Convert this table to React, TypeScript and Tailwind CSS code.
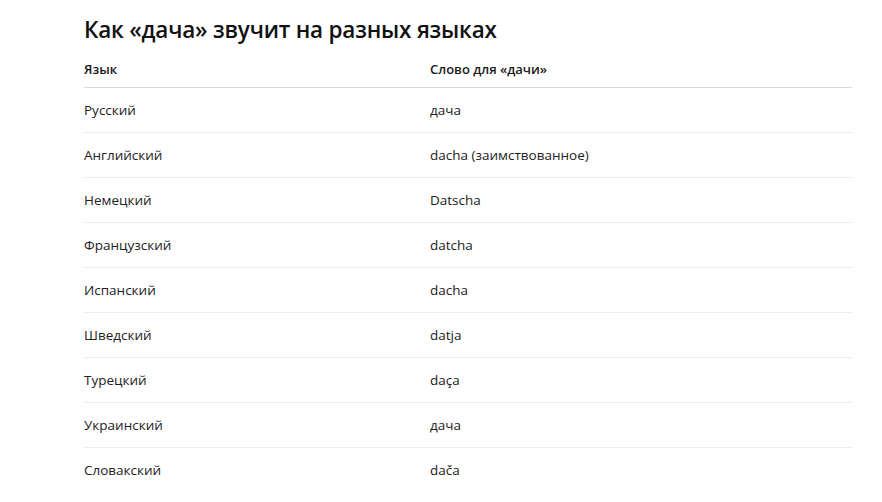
const rows: [string, string][] = [
  ['Русский', 'дача'],
  ['Английский', 'dacha (заимствованное)'],
  ['Немецкий', 'Datscha'],
  ['Французский', 'datcha'],
  ['Испанский', 'dacha'],
  ['Шведский', 'datja'],
  ['Турецкий', 'daça'],
  ['Украинский', 'дача'],
  ['Словакский', 'dača'],
]

export default function App() {
  return (
    <div
      className="min-h-screen bg-white text-[#1a1a1a] pl-[84px] pr-[30px] pt-[14px]"
      style={{ fontFamily: '"Open Sans", "Noto Sans", sans-serif' }}
    >
      <h1 className="text-[22.5px] font-semibold leading-[32px] tracking-[-0.2px] text-[#111]">
        Как «дача» звучит на разных языках
      </h1>

      <div className="mt-[13px] w-[768px]">
        {/* Header */}
        <div className="grid grid-cols-[346px_1fr] border-b border-[#d8d8d8] h-[29px] text-[13px] font-semibold text-[#1a1a1a]">
          <div className="leading-[20px]">Язык</div>
          <div className="leading-[20px]">Слово для «дачи»</div>
        </div>

        {rows.map(([lang, word], i) => (
          <div
            key={lang}
            className={`grid grid-cols-[346px_1fr] h-[45px] items-center text-[13.5px] text-[#222] ${
              i < rows.length - 1 ? 'border-b border-[#eeeeee]' : ''
            }`}
          >
            <div>{lang}</div>
            <div>{word}</div>
          </div>
        ))}
      </div>
    </div>
  )
}
